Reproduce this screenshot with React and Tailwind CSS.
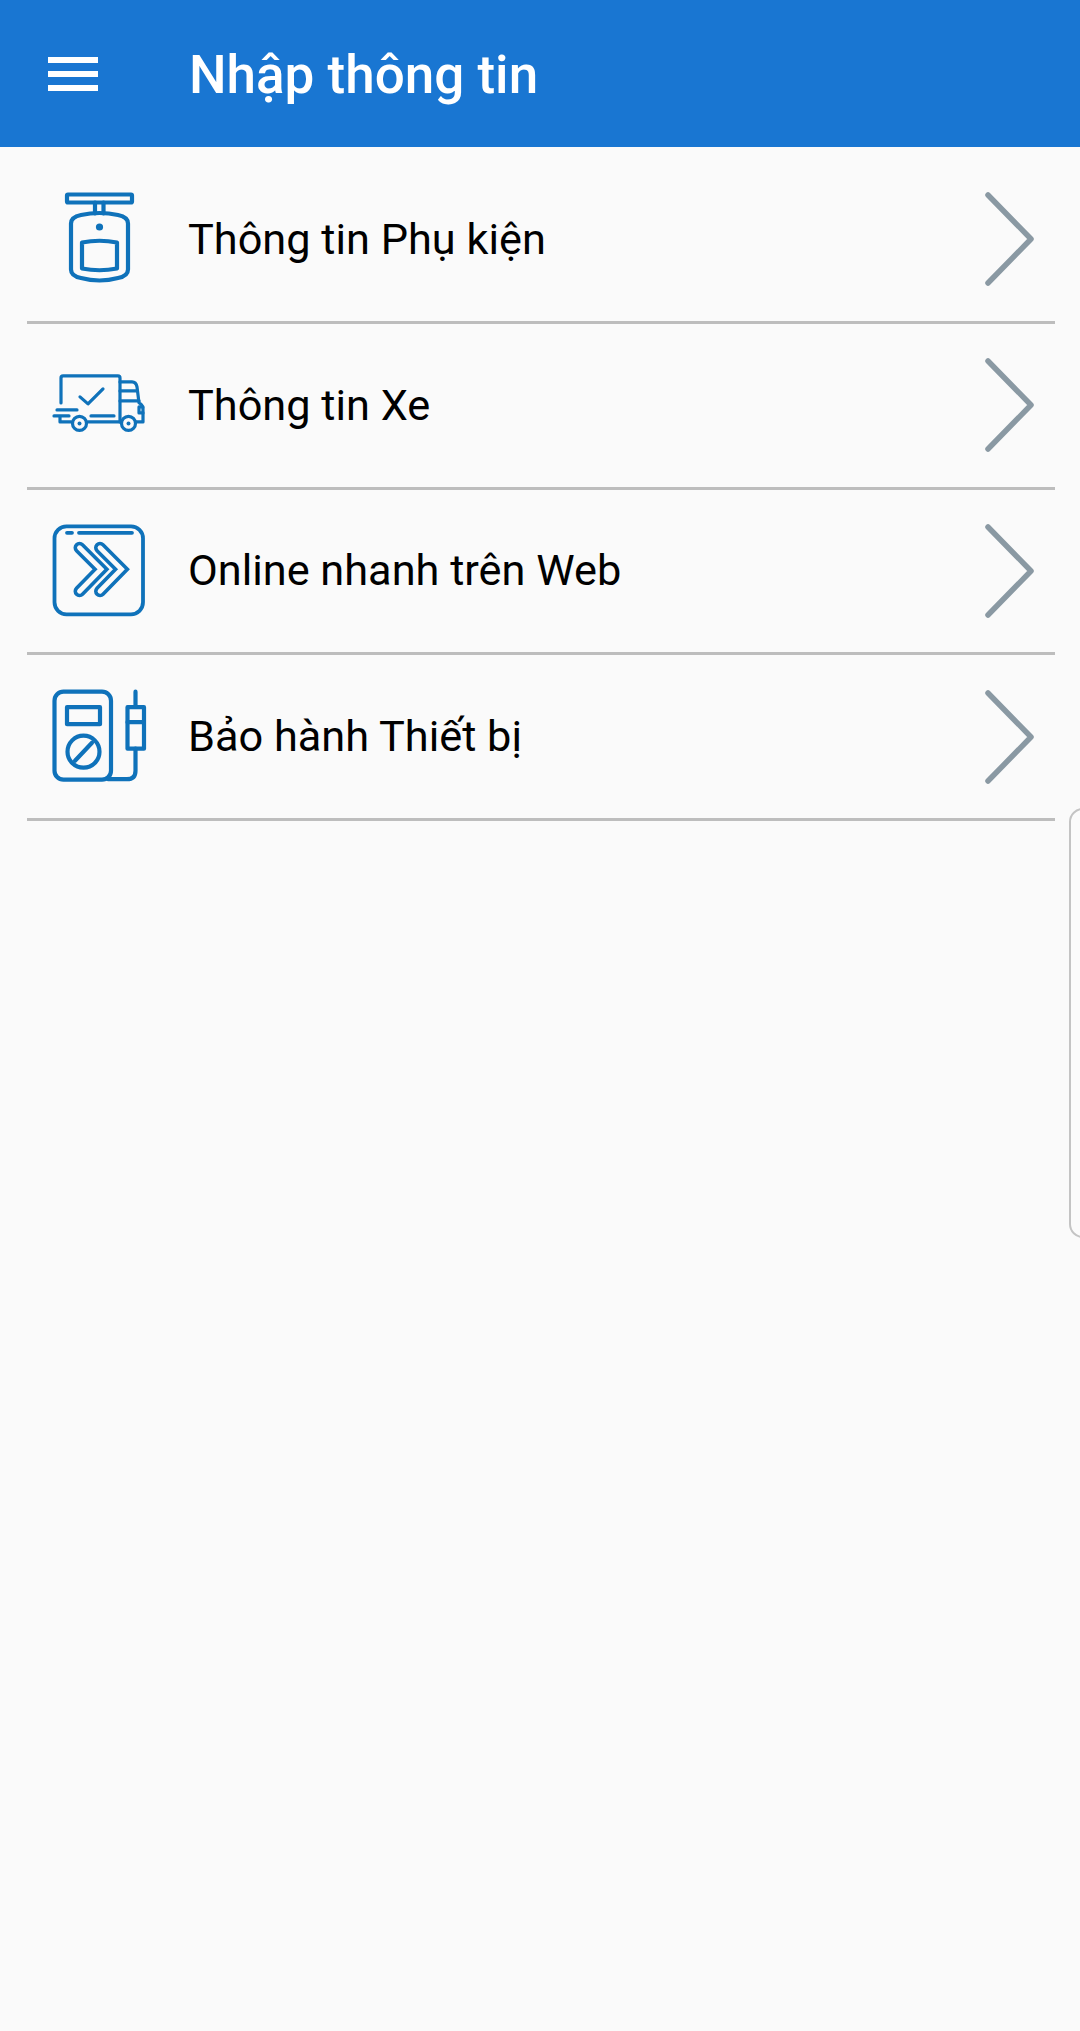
const BLUE = '#0f72ba';

const AccessoryIcon = () => (
  <svg viewBox="21 21.5 96 96" className="w-[96px] h-[96px] shrink-0" fill="none" stroke={BLUE} strokeWidth="4.2" strokeLinejoin="round" strokeLinecap="round">
    <rect x="37" y="25" width="65" height="8" rx="1" />
    <path d="M65 33V44M73.5 33V44" />
    <path d="M41 54C41 49 46 46.5 51 45.5Q69.5 41.5 88 45.5C93 46.5 98 49 98 54V100C98 105 93 107.5 88 108.5Q69.5 113.5 51 108.5C46 107.5 41 105 41 100Z" />
    <circle cx="69.5" cy="57.5" r="3.6" fill={BLUE} stroke="none" />
    <path d="M52 73Q69.5 69.5 87 73V99Q69.5 102.5 52 99Z" />
  </svg>
);

const TruckIcon = () => (
  <svg viewBox="21 12.1 96 96" className="w-[96px] h-[96px] shrink-0" fill="none" stroke={BLUE} strokeWidth="3.2" strokeLinejoin="round" strokeLinecap="round">
    <path d="M31 58V33Q31 31 33 31H88Q90 31 90 33V77" />
    <path d="M50 52L58 59L73 44" />
    <path d="M27 65H47M24 71H39M30 71V77H41M61 71H84M58 77H90" />
    <circle cx="49.5" cy="78.5" r="7" />
    <circle cx="49.5" cy="78.5" r="2" fill={BLUE} stroke="none" />
    <circle cx="98.5" cy="78.5" r="7" />
    <circle cx="98.5" cy="78.5" r="2" fill={BLUE} stroke="none" />
    <path d="M90 37H102Q106 37 107 42L109 58Q113.5 60 113 66V77H106" />
    <path d="M90 46H106M90 56H109M113 62H109V68H113" />
  </svg>
);

const chevrons = ['M49.5 42.5L71 64L49.5 86', 'M70 42.5L91.5 64L70 86'];

const WebIcon = () => (
  <svg viewBox="21 17.7 96 96" className="w-[96px] h-[96px] shrink-0" fill="none" stroke={BLUE} strokeWidth="3.8" strokeLinejoin="round" strokeLinecap="round">
    <rect x="24.5" y="21" width="88.5" height="88" rx="12" />
    <path d="M37 27.5H42M49 27.5H102" />
    {chevrons.map((d) => (
      <g key={d}>
        <path d={d} strokeWidth="12" strokeLinejoin="miter" />
        <path d={d} strokeWidth="4.8" strokeLinejoin="miter" stroke="#fafafa" />
      </g>
    ))}
  </svg>
);

const MeterIcon = () => (
  <svg viewBox="21 18.3 96 96" className="w-[96px] h-[96px] shrink-0" fill="none" stroke={BLUE} strokeWidth="4.2" strokeLinejoin="round" strokeLinecap="round">
    <rect x="24.5" y="21" width="56.5" height="88" rx="9" />
    <rect x="37" y="36.5" width="33" height="17" />
    <circle cx="53.5" cy="81" r="16" />
    <path d="M45 90L62 72" />
    <rect x="97.5" y="36.5" width="16.5" height="41.5" />
    <path d="M97.5 51.5H114M105.5 21V36M105.5 78V100Q105.5 108.5 97 108.5H78" />
  </svg>
);

const Chevron = () => (
  <svg viewBox="0 0 60 100" className="w-[60px] h-[100px] ml-auto mr-[16px] shrink-0" fill="none" stroke="#8a99a3" strokeWidth="5.5" strokeLinecap="round" strokeLinejoin="round">
    <path d="M9 6L52 50L9 94" />
  </svg>
);

const ITEMS = [
  { label: 'Thông tin Phụ kiện', icon: AccessoryIcon },
  { label: 'Thông tin Xe', icon: TruckIcon },
  { label: 'Online nhanh trên Web', icon: WebIcon },
  { label: 'Bảo hành Thiết bị', icon: MeterIcon },
];

export default function App() {
  return (
    <div className="relative min-h-[2031px] bg-[#fafafa] overflow-hidden font-['Roboto',sans-serif]">
      {/* Header */}
      <header className="h-[147px] bg-[#1976d2] flex items-center pl-[48px]">
        <div className="w-[50px] flex flex-col gap-[8px]">
          <span className="h-[6px] bg-white" />
          <span className="h-[6px] bg-white" />
          <span className="h-[6px] bg-white" />
        </div>
        <h1 className="ml-[91px] mt-[3px] text-[53px] leading-[60px] font-medium text-white">Nhập thông tin</h1>
      </header>

      {/* Menu */}
      <div className="pt-[11px] ml-[27px] mr-[25px]">
        {ITEMS.map(({ label, icon: Icon }) => (
          <div key={label} className="h-[165.8px] flex items-center pl-[24px] border-b-[3px] border-[#bdbdbd]">
            <Icon />
            <span className="ml-[41px] mt-[1px] text-[43.3px] leading-[50px] text-black">{label}</span>
            <Chevron />
          </div>
        ))}
      </div>

      {/* Edge handle */}
      <div className="absolute left-[1069px] top-[808px] w-[20px] h-[430px] rounded-l-[14px] border-2 border-[#c4c4c4] bg-[#fbfbfb]" />
    </div>
  );
}
